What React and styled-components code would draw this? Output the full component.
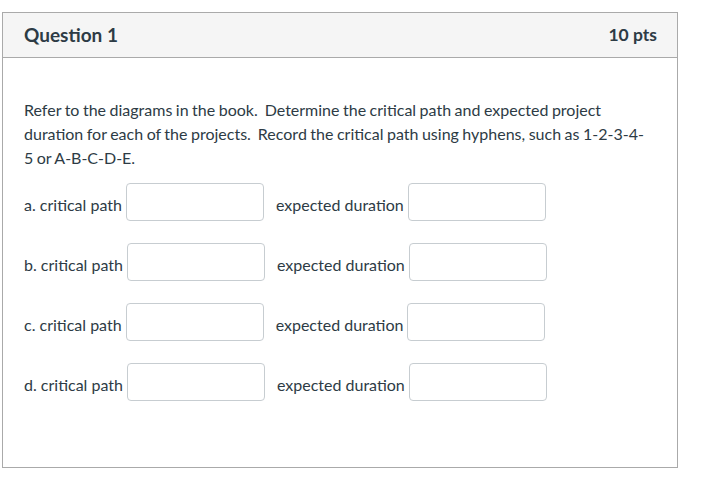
import React from "react";
import styled, { createGlobalStyle } from "styled-components";

const GlobalStyle = createGlobalStyle`
  body {
    margin: 0;
    background: #fff;
    font-family: Lato, "Open Sans", sans-serif;
    color: #2d3b45;
  }
`;

const Card = styled.div`
  box-sizing: border-box;
  width: 676px;
  margin: 12px 0 0 2px;
  border: 1px solid #aaaaaa;
`;

const Header = styled.div`
  box-sizing: border-box;
  height: 45px;
  display: flex;
  justify-content: space-between;
  align-items: center;
  padding: 0 20px 2px 21px;
  background: #f5f5f5;
  border-bottom: 1px solid #aaaaaa;
`;

const Title = styled.div`
  font-size: 19px;
  font-weight: 700;
  color: #2d3b45;
`;

const Points = styled.div`
  font-size: 17.5px;
  font-weight: 700;
  color: #2d3b45;
`;

const Body = styled.div`
  padding: 40px 0 66px 21px;
  font-size: 16px;
  line-height: 24px;
`;

const Text = styled.p`
  margin: 0 0 13px;
  max-width: 622px;
  word-spacing: -0.6px;
`;

const Rows = styled.div`
  display: flex;
  flex-direction: column;
  gap: 22px;
`;

const Row = styled.div`
  display: flex;
  align-items: center;
`;

const Label = styled.span`
  padding-top: 6px;
  margin-left: ${(p) => p.$gap || 0}px;
  white-space: nowrap;
`;

const Field = styled.input`
  box-sizing: border-box;
  width: 138px;
  height: 38px;
  margin-left: 4px;
  border: 1px solid #c7cdd1;
  border-radius: 4px;
  background: #fff;
  font: inherit;
`;

const rows = ["a", "b", "c", "d"];

export default function App() {
  return (
    <>
      <GlobalStyle />
      <Card>
        <Header>
          <Title>Question 1</Title>
          <Points>10 pts</Points>
        </Header>
        <Body>
          <Text>
            Refer to the diagrams in the book.&nbsp; Determine the critical path and expected
            project duration for each of the projects.&nbsp; Record the critical path using
            hyphens, such as 1-2-3-4-5 or A-B-C-D-E.
          </Text>
          <Rows>
            {rows.map((r) => (
              <Row key={r}>
                <Label>{r}. critical path</Label>
                <Field type="text" />
                <Label $gap={12}>expected duration</Label>
                <Field type="text" />
              </Row>
            ))}
          </Rows>
        </Body>
      </Card>
    </>
  );
}
